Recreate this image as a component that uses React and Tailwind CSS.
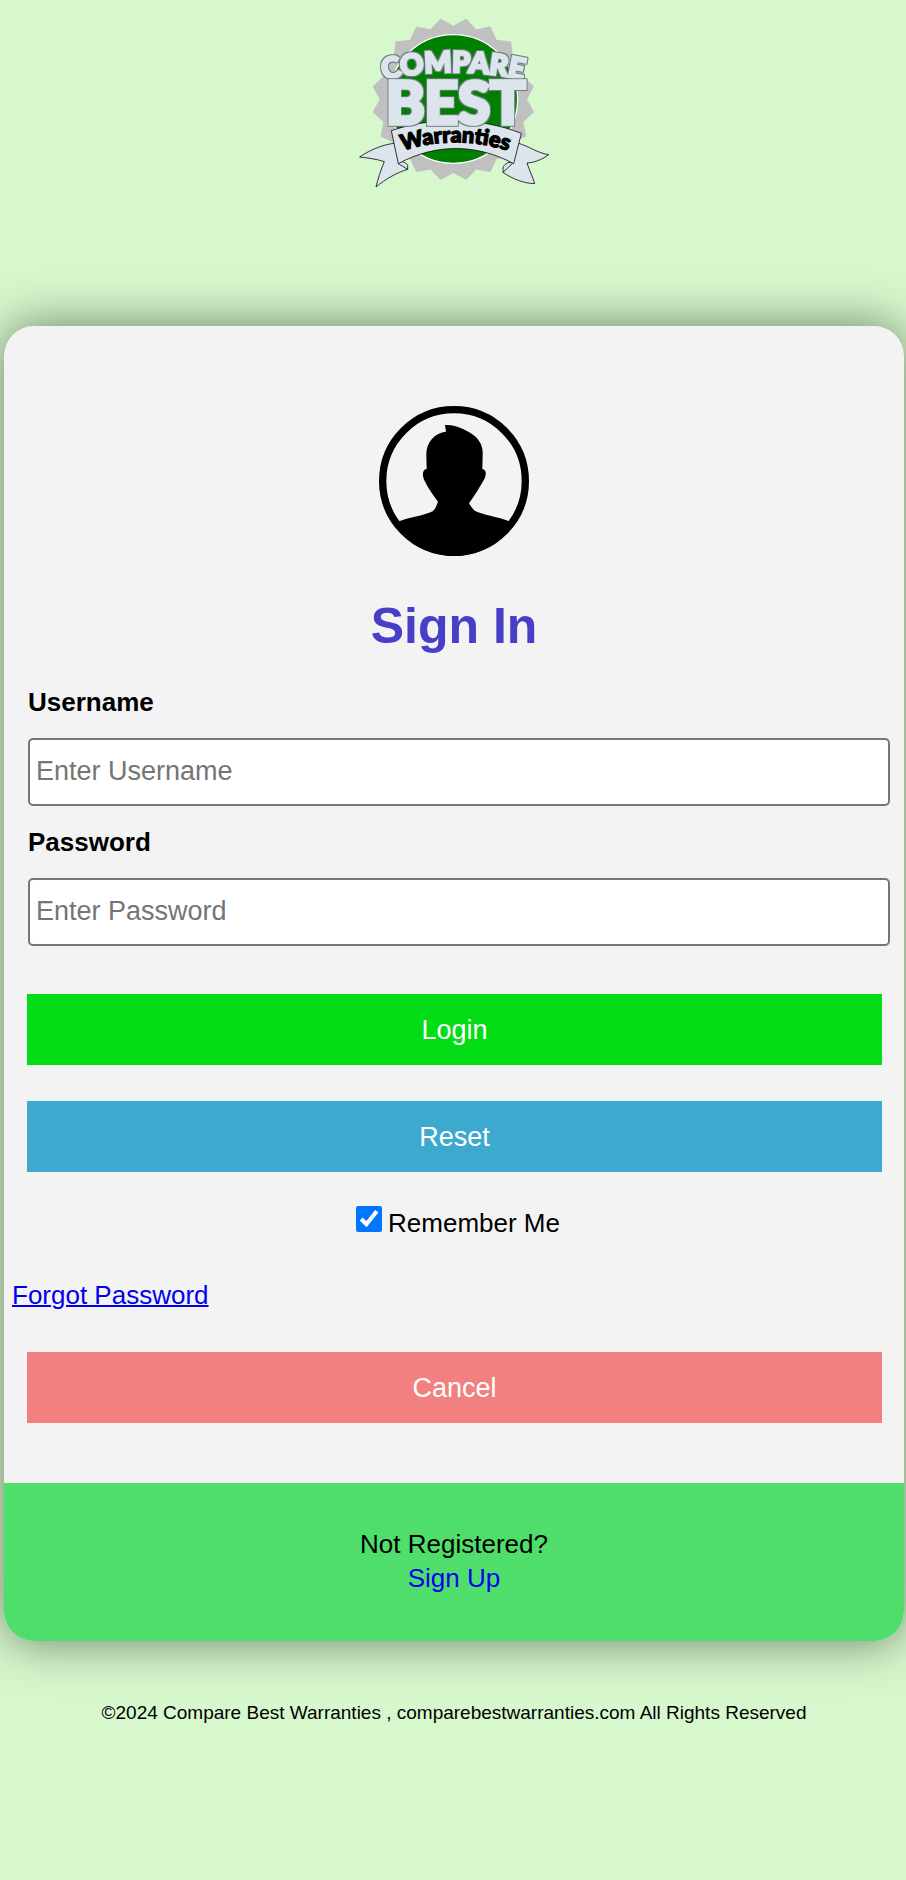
import React, { useState } from "react";

// 20 pointed seal behind the logo
const sealPoints = Array.from({ length: 40 }, (_, i) => {
  const angle = ((i * 9 - 90) * Math.PI) / 180;
  const radius = i % 2 === 0 ? 221 : 245;
  return `${(310 + radius * Math.cos(angle)).toFixed(1)},${(268 + radius * Math.sin(angle)).toFixed(1)}`;
}).join(" ");

function Logo() {
  return (
    <svg
      className="w-[210px] h-[190px]"
      viewBox="0 0 630 570"
      role="img"
      aria-label="Compare Best Warranties"
    >
      <defs>
        <path id="compareArc" d="M78 214 Q310 158 542 214" />
        <path id="ribbonArc" d="M130 432 Q316 362 502 432" />
        <filter id="outline" x="-5%" y="-10%" width="110%" height="120%">
          <feMorphology in="SourceAlpha" operator="dilate" radius="3" result="grown" />
          <feFlood floodColor="#707c80" />
          <feComposite in2="grown" operator="in" result="edge" />
          <feMerge>
            <feMergeNode in="edge" />
            <feMergeNode in="SourceGraphic" />
          </feMerge>
        </filter>
      </defs>
      <polygon points={sealPoints} fill="#c0c0c0" />
      <circle cx="310" cy="267" r="193" fill="#008000" stroke="#fff" strokeWidth="4" />

      <g fill="#dce4ec" stroke="#111" strokeWidth="2.5" strokeLinejoin="round">
        <path d="M134 400 C105 402 62 418 29 441 C54 444 79 447 103 455 C92 480 84 506 78 531 C106 508 139 488 173 478 L152 456 Z" />
        <path d="M506 400 C535 408 565 430 596 434 C574 450 552 458 531 459 C538 480 548 501 554 521 C522 520 487 507 459 487 L480 459 Z" />
        <path d="M145 461 C143 450 166 454 173 466 L173 478 Z" />
        <path d="M487 461 C486 451 462 459 459 474 L459 487 Z" />
        <path d="M124 362 C240 321 390 321 514 370 L491 461 C382 402 258 399 145 461 Z" />
      </g>

      <g
        fontFamily="Lato, 'Liberation Sans', sans-serif"
        fontWeight="900"
        fill="#dce4ec"
        stroke="#dce4ec"
        strokeLinejoin="miter"
      >
        <text fontSize="86" strokeWidth="7" textAnchor="middle" filter="url(#outline)">
          <textPath href="#compareArc" startOffset="50%">COMPARE</textPath>
        </text>
        <text x="317" y="341" fontSize="175" strokeWidth="11" textAnchor="middle" filter="url(#outline)">
          BEST
        </text>
      </g>
      <text
        fontFamily="Lato, 'Liberation Sans', sans-serif"
        fontWeight="900"
        fontSize="65"
        fill="#000"
        stroke="#000"
        strokeWidth="4"
        textAnchor="middle"
      >
        <textPath href="#ribbonArc" startOffset="50%">Warranties</textPath>
      </text>
    </svg>
  );
}

function Avatar() {
  return (
    <svg className="w-[150px] h-[150px]" viewBox="27 33 450 450" aria-hidden="true">
      <circle cx="252" cy="258" r="214" fill="none" stroke="#000" strokeWidth="22" />
      <path d="M225 90 C260 88 294 107 315 124 C334 142 339 160 338 180 L337 222 C350 224 350 240 341 256 C326 282 312 305 297 325 C302 333 306 340 314 347 C340 360 380 364 416 378 L430 385 C390 445 325 483 252 483 C179 483 115 445 74 385 L90 378 C123 366 161 362 188 349 C196 342 199 334 204 320 C189 299 173 278 164 258 C156 242 156 224 170 222 L169 180 C168 140 195 114 228 110 Z" />
    </svg>
  );
}

function Field({ id, label, type, value, onChange }) {
  return (
    <div className="mb-5 ml-6 mr-3.5">
      <label htmlFor={id} className="block font-bold leading-8 mb-5">
        {label}
      </label>
      <input
        id={id}
        type={type}
        placeholder={`Enter ${label}`}
        value={value}
        onChange={(e) => onChange(e.target.value)}
        className="block w-full h-[68px] px-1.5 pb-0.5 text-[27px] bg-white border-2 border-[#767676] rounded-[5px] outline-none placeholder:text-[#757575]"
      />
    </div>
  );
}

const buttonStyle = "block h-[71px] text-[27px] text-white";

function App() {
  const [username, setUsername] = useState("");
  const [password, setPassword] = useState("");
  const [remember, setRemember] = useState(true);

  const handleReset = () => {
    setUsername("");
    setPassword("");
  };

  return (
    <div className="min-h-screen bg-[#d7f8cd] text-black text-[26px] leading-[34px] font-['Helvetica','Liberation_Sans',Arial,sans-serif]">
      <header className="flex justify-center pt-2.5 pb-[126px] pl-1">
        <Logo />
      </header>

      <main className="ml-1 mr-0.5 rounded-[30px] bg-[#f3f3f3] overflow-hidden shadow-[0_0_50px_rgba(0,0,0,0.5)]">
        <form className="pt-20 pb-[60px]" onSubmit={(e) => e.preventDefault()}>
          <div className="flex justify-center">
            <Avatar />
          </div>
          <h1 className="text-center text-[50px] leading-[60px] font-bold text-[#483fc8] mt-10 mb-[30px]">
            Sign In
          </h1>

          <Field id="username" label="Username" type="text" value={username} onChange={setUsername} />
          <Field id="password" label="Password" type="password" value={password} onChange={setPassword} />

          <div className="flex flex-col gap-9 mt-12 ml-[23px] mr-[22px]">
            <button type="submit" className={`${buttonStyle} bg-[#03dd16]`}>
              Login
            </button>
            <button type="button" onClick={handleReset} className={`${buttonStyle} bg-[#3ea9cf]`}>
              Reset
            </button>
          </div>

          <div className="flex justify-center mt-[34px] pl-2">
            <label className="flex items-start gap-1.5">
              <input
                type="checkbox"
                checked={remember}
                onChange={(e) => setRemember(e.target.checked)}
                className="size-[26px] accent-[#0075ff]"
              />
              <span>Remember Me</span>
            </label>
          </div>

          <div className="mt-[38px] ml-2">
            <a href="#forgot" className="text-[#0000ee] underline decoration-2">
              Forgot Password
            </a>
          </div>

          <div className="flex flex-col mt-10 ml-[23px] mr-[22px]">
            <button type="button" className={`${buttonStyle} bg-[#f28080]`}>
              Cancel
            </button>
          </div>
        </form>

        <div className="bg-[#4fde6b] text-center pt-11 pb-[46px]">
          <div>Not Registered?</div>
          <a href="#signup" className="text-[#0000ee]">
            Sign Up
          </a>
        </div>
      </main>

      <footer className="text-center text-[19px] leading-6 mt-[60px] pl-0.5">
        ©2024 Compare Best Warranties , comparebestwarranties.com All Rights Reserved
      </footer>
    </div>
  );
}

export default App;
